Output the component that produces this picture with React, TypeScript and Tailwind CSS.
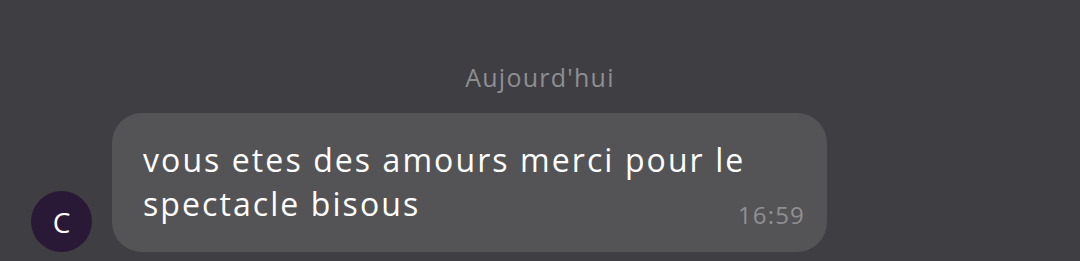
export default function App() {
  return (
    <div className="h-[261px] w-[1080px] overflow-hidden bg-[#3f3f43] font-['Open_Sans',sans-serif]">
      <div className="flex justify-center pt-[59px]">
        <span className="text-[25px] leading-[36px] tracking-[0.05em] text-[#8e8e92]">Aujourd'hui</span>
      </div>
      {/* message row */}
      <div className="mt-[18px] flex items-end pl-[31px]">
        <div className="flex h-[61px] w-[61px] items-center justify-center rounded-full bg-[#2a1936] text-[28px] text-white">
          C
        </div>
        <div className="relative ml-[20px] w-[715px] rounded-[30px] bg-[#545456] pb-[26px] pl-[31px] pr-[22px] pt-[25px]">
          <p className="w-[640px] text-[32px] leading-[44px] tracking-[0.065em] text-white">
            vous etes des amours merci pour le spectacle bisous
          </p>
          <span className="absolute bottom-[22px] right-[22px] text-[24px] leading-[30px] tracking-[0.05em] text-[#8f8f91]">
            16:59
          </span>
        </div>
      </div>
    </div>
  );
}
